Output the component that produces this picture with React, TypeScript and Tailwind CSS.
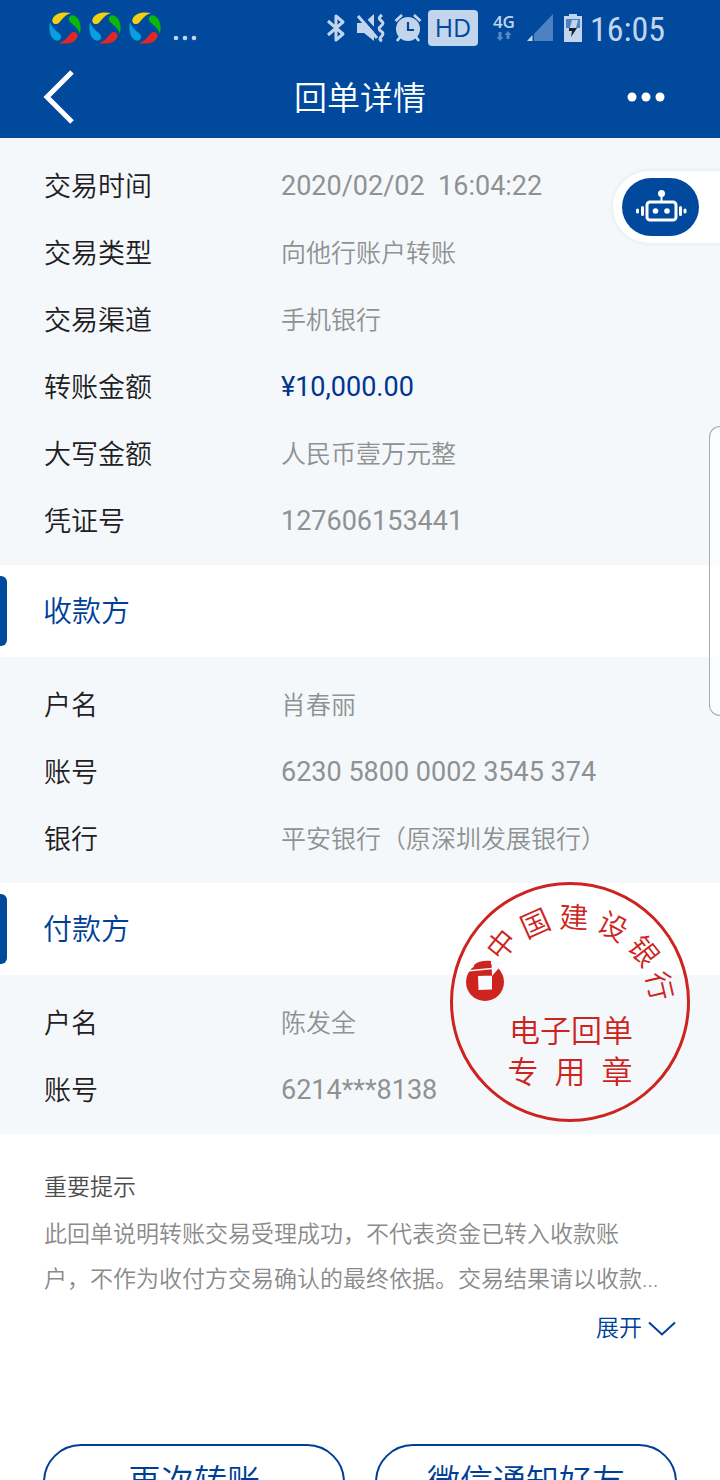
import React from 'react';

interface Field {
  label: string;
  value: string;
  kind?: 'number' | 'amount';
}

const transaction: Field[] = [
  { label: '交易时间', value: '2020/02/02  16:04:22', kind: 'number' },
  { label: '交易类型', value: '向他行账户转账' },
  { label: '交易渠道', value: '手机银行' },
  { label: '转账金额', value: '¥10,000.00', kind: 'amount' },
  { label: '大写金额', value: '人民币壹万元整' },
  { label: '凭证号', value: '127606153441', kind: 'number' },
];

const payee: Field[] = [
  { label: '户名', value: '肖春丽' },
  { label: '账号', value: '6230 5800 0002 3545 374', kind: 'number' },
  { label: '银行', value: '平安银行（原深圳发展银行）' },
];

const payer: Field[] = [
  { label: '户名', value: '陈发全' },
  { label: '账号', value: '6214***8138', kind: 'number' },
];

const valueStyles = {
  text: 'text-[25px] text-[#8f9192]',
  number: 'text-[27px] font-normal text-[#8f9192]',
  amount: 'text-[27px] font-normal text-[#003591]',
};

const stampArc = [
  { char: '中', x: 51, y: 62, angle: -51 },
  { char: '国', x: 85, y: 41, angle: -24 },
  { char: '建', x: 124, y: 35, angle: 2 },
  { char: '设', x: 163, y: 44, angle: 28 },
  { char: '银', x: 194, y: 69, angle: 52 },
  { char: '行', x: 210, y: 104, angle: 77 },
];

const petal = 'M22 1C14 -0.500 7 1 4 6C2 10 4.500 12.500 8 12C12 11 13 4 22 1Z';

const AppBadge = () => (
  <svg className="size-8" viewBox="0 0 32 32" aria-hidden="true">
    <path d={petal} fill="#f0d010" />
    <path d={petal} fill="#08b80c" transform="rotate(90 16 16)" />
    <path d={petal} fill="#e02828" transform="rotate(180 16 16)" />
    <path d={petal} fill="#06a0e0" transform="rotate(270 16 16)" />
  </svg>
);

const StatusBar = () => (
  <div className="flex h-14 items-center justify-between pr-[55px] pl-[49px] text-[#c3d5ed]">
    <div className="flex items-center gap-2">
      <AppBadge />
      <AppBadge />
      <AppBadge />
      <svg className="mt-5 ml-1 h-1.5 w-6" viewBox="0 0 24 6" fill="currentColor" aria-hidden="true">
        <circle cx="3" cy="3" r="2.300" />
        <circle cx="12" cy="3" r="2.300" />
        <circle cx="21" cy="3" r="2.300" />
      </svg>
    </div>
    <div className="flex items-center">
      <svg className="h-[30px] w-5" viewBox="0 0 20 30" fill="none" stroke="currentColor" strokeWidth="3" strokeLinejoin="round" aria-hidden="true">
        <path d="M2 8L17 21L10 27V3L17 9L2 22" />
      </svg>
      <svg className="ml-2.5 h-[30px] w-[30px]" viewBox="0 0 30 30" aria-hidden="true">
        <path d="M1 10H8L18 1V28L8 20H1Z" fill="currentColor" />
        <path d="M3 0L24 23" stroke="#00499d" strokeWidth="3.500" />
        <path d="M2 3L21 25" stroke="currentColor" strokeWidth="3" />
        <path d="M26 2C22 5 23 6 25.500 8C28 10 27 11 25 13C22 15 23 17 25.500 18.500C28 20 27 22 25 24C23 26 24 27 26 28" fill="none" stroke="currentColor" strokeWidth="3" />
      </svg>
      <svg className="ml-2 h-[30px] w-7" viewBox="0 0 28 30" fill="none" stroke="currentColor" aria-hidden="true">
        <circle cx="14" cy="16" r="12" fill="currentColor" stroke="none" />
        <path d="M1.500 8L8 2M26.500 8L20 2M6 24L3 28M22 24L25 28" strokeWidth="2.800" />
        <path d="M14 9V17H20" stroke="#00499d" strokeWidth="2.200" />
      </svg>
      <span className="ml-1.5 flex h-9 w-[50px] items-center justify-center rounded bg-[#c3d5ed] font-['Open_Sans',sans-serif] text-[25px] font-medium text-[#00499d]">
        HD
      </span>
      <div className="ml-3 flex w-7 flex-col items-center">
        <span className="font-['Open_Sans',sans-serif] text-[17px] leading-4 font-semibold">4G</span>
        <svg className="h-3 w-4" viewBox="0 0 16 12" fill="#5a89c6" aria-hidden="true">
          <path d="M2.500 2H5.500V7H7.500L4 11L0.500 7H2.500ZM10.500 9V5H8.500L12 1L15.500 5H13.500V9Z" />
        </svg>
      </div>
      <svg className="ml-2 h-[30px] w-7" viewBox="0 0 28 30" aria-hidden="true">
        <path d="M8 21V28H27V1Z" fill="#4d82c2" />
        <path d="M1 28L6.500 22V28Z" fill="currentColor" />
      </svg>
      <svg className="ml-2.5 h-[30px] w-[18px]" viewBox="0 0 18 30" aria-hidden="true">
        <path d="M5 1H13V3H18V29H0V3H5Z" fill="currentColor" />
        <path d="M2 6H16V15H2Z" fill="#4d82c2" />
        <path d="M8 7H14L12 15H15L7 25L9 18H5Z" fill="currentColor" />
        <path d="M5 15H13L7 24L8 18H5Z" fill="#102030" />
      </svg>
      <span className="ml-2 pt-0.5 font-['Roboto_Condensed',Roboto,sans-serif] text-[34px] font-normal">16:05</span>
    </div>
  </div>
);

const Header = () => (
  <header className="shrink-0 bg-[#00499d]">
    <StatusBar />
    <div className="flex h-[82px] items-center justify-between px-[43px] text-white">
      <button type="button" aria-label="返回" className="flex w-[50px] items-center">
        <svg className="h-[54px] w-8" viewBox="0 0 32 54" fill="none" stroke="currentColor" strokeWidth="5" aria-hidden="true">
          <path d="M29 2L4 27L29 52" />
        </svg>
      </button>
      <h1 className="pt-1 text-[33px] font-[350]">回单详情</h1>
      <button type="button" aria-label="更多" className="flex w-[50px] items-center">
        <svg className="h-2.5 w-[38px]" viewBox="0 0 38 10" fill="currentColor" aria-hidden="true">
          <circle cx="5" cy="5" r="4.500" />
          <circle cx="19" cy="5" r="4.500" />
          <circle cx="33" cy="5" r="4.500" />
        </svg>
      </button>
    </div>
  </header>
);

const FieldList = ({ fields }: { fields: Field[] }) => (
  <dl className="bg-[#f4f8fb] px-11 pt-3.5 pb-[11px]">
    {fields.map((field) => (
      <div key={field.label} className="flex h-[67px] items-center">
        <dt className="w-[237px] shrink-0 pt-1 text-[27px] text-[#1f2021]">{field.label}</dt>
        <dd className={`whitespace-pre pt-0.5 ${valueStyles[field.kind ?? 'text']}`}>{field.value}</dd>
      </div>
    ))}
  </dl>
);

const SectionTitle = ({ children }: { children: React.ReactNode }) => (
  <div className="flex h-[92px] items-center bg-white">
    <span className="h-[70px] w-[7px] rounded-r-md bg-[#00499d]" />
    <h2 className="ml-9 pt-1 text-[29px] text-[#003f98]">{children}</h2>
  </div>
);

const AssistantButton = () => (
  <div className="absolute top-[33px] right-0 flex h-[72px] w-[107px] items-center rounded-l-full bg-white pl-[9px] shadow-[0_0_5px_rgba(0,0,0,0.08)]">
    <button type="button" aria-label="智能客服" className="flex h-[58px] w-[77px] items-center justify-center rounded-[29px] bg-[#00499d]">
      <svg className="h-9 w-[52px]" viewBox="0 0 52 36" fill="none" stroke="white" aria-hidden="true">
        <rect x="12" y="13" width="29" height="18" rx="3" strokeWidth="3" />
        <path d="M26.500 5V13" strokeWidth="2" />
        <circle cx="26.500" cy="4.500" r="3.500" fill="white" stroke="none" />
        <circle cx="20.500" cy="22" r="2.800" fill="white" stroke="none" />
        <circle cx="32" cy="22" r="2.800" fill="white" stroke="none" />
        <path d="M7.500 18.500V25.500M45.500 18.500V25.500" strokeWidth="3" strokeLinecap="round" />
        <path d="M2.500 21V23M50 21V23" strokeWidth="3" strokeLinecap="round" />
      </svg>
    </button>
  </div>
);

const Stamp = () => (
  <svg className="absolute right-[30px] bottom-3 size-60" viewBox="0 0 240 240" fill="#cd2420" aria-label="中国建设银行 电子回单专用章">
    <circle cx="120" cy="120" r="118.500" fill="none" stroke="#cd2420" strokeWidth="3" />
    <g fontSize="29" textAnchor="middle">
      {stampArc.map(({ char, x, y, angle }) => (
        <text key={char} x={x} y={y + 11} transform={`rotate(${angle} ${x} ${y})`}>{char}</text>
      ))}
    </g>
    <g fontSize="31" textAnchor="middle">
      <text x="121" y="160">电子回单</text>
      <text x="73" y="201">专</text>
      <text x="120" y="201">用</text>
      <text x="167" y="201">章</text>
    </g>
    <circle cx="35" cy="100" r="19" />
    <path d="M24 83C28 79 34 78.500 41 79V85L24 87Z" />
    <path d="M28 94L42 93.500V107.500L28.500 108ZM41.500 78L53 80L48.500 86.500L42 94Z" fill="#f7fafc" />
    <path d="M17 89L42 86.500" fill="none" stroke="#f7fafc" strokeWidth="1.500" />
  </svg>
);

const Notice = () => (
  <section className="px-11 pt-9">
    <h3 className="text-[23px] leading-9 text-[#4d4d4d]">重要提示</h3>
    <p className="mt-1.5 line-clamp-2 text-[23px] leading-[45px] text-[#8a8a8a]">
      此回单说明转账交易受理成功，不代表资金已转入收款账
      <br />
      户，不作为收付方交易确认的最终依据。交易结果请以收款...
    </p>
    <button type="button" className="mt-2.5 ml-auto flex items-center gap-1.5 text-[23px] text-[#003f98]">
      展开
      <svg className="h-4 w-7" viewBox="0 0 28 16" fill="none" stroke="currentColor" strokeWidth="2" aria-hidden="true">
        <path d="M1 1.500L14 13.500L27 1.500" />
      </svg>
    </button>
  </section>
);

const App = () => {
  return (
    <div className="flex h-screen flex-col overflow-hidden bg-white font-[Roboto,'Noto_Sans_CJK_SC',sans-serif] font-[350]">
      <Header />
      <main className="relative flex-1 overflow-y-auto [scrollbar-width:none]">
        <FieldList fields={transaction} />
        <SectionTitle>收款方</SectionTitle>
        <FieldList fields={payee} />
        <div className="relative">
          <SectionTitle>付款方</SectionTitle>
          <FieldList fields={payer} />
          <Stamp />
        </div>
        <Notice />
        <div className="mt-[97px] grid grid-cols-2 gap-[30px] px-[43px] pb-10 text-[33px] text-[#003f98]">
          <button type="button" className="h-[76px] rounded-full border-2 border-[#003f98]">再次转账</button>
          <button type="button" className="h-[76px] rounded-full border-2 border-[#003f98]">微信通知好友</button>
        </div>
        <AssistantButton />
        <div className="absolute top-[288px] right-0 h-[290px] w-[11px] rounded-l-xl border border-r-0 border-[#a8abad] bg-white/60" />
      </main>
    </div>
  );
};

export default App;
